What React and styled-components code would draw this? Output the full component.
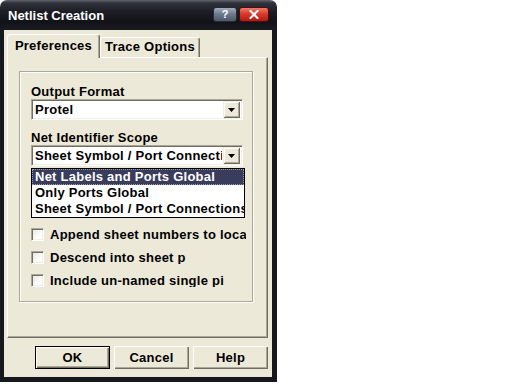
import React from "react";
import styled, { createGlobalStyle } from "styled-components";

const C = {
  face: "#ece9d8",
  hi: "#ffffff",
  light: "#f1efe2",
  shadow: "#aca899",
  dark: "#716f64",
  frame: "#17181e",
};

const Global = createGlobalStyle`
  html, body { margin: 0; padding: 0; background: #ffffff; }
  body { font-family: "Liberation Sans", Arial, sans-serif; }
`;

const Window = styled.div`
  width: 277px;
  height: 382px;
  display: flex;
  flex-direction: column;
  font: bold 13px "Liberation Sans", Arial, sans-serif;
  letter-spacing: 0.25px;
  color: #000;
`;

const TitleBar = styled.div`
  height: 30px;
  flex: none;
  display: flex;
  align-items: flex-start;
  box-sizing: border-box;
  padding: 0 8px;
  border-radius: 7px 7px 0 0;
  background: linear-gradient(
    180deg,
    #62656f 0px,
    #30323b 3px,
    #1c1d24 12px,
    #121318 22px,
    #1a1b22 30px
  );
  color: #fff;
  letter-spacing: 0;
`;

const Title = styled.span`
  flex: 1;
  margin-top: 8px;
  line-height: 16px;
`;

const CaptionButton = styled.div`
  margin-top: 7px;
  margin-left: 2px;
  width: ${(p) => p.$w}px;
  height: 15px;
  box-sizing: border-box;
  border-radius: 3px;
  display: flex;
  align-items: center;
  justify-content: center;
  color: #fff;
  font-size: 11px;
  line-height: 13px;
  border: 1px solid ${(p) => (p.$close ? "#4e0f0c" : "#262b35")};
  background: ${(p) =>
    p.$close
      ? "linear-gradient(180deg, #f07a6c 0%, #d83a2c 45%, #b01c12 100%)"
      : "linear-gradient(180deg, #a3adbd 0%, #6f7b8e 45%, #4d586a 100%)"};
`;

const Frame = styled.div`
  flex: 1;
  display: flex;
  flex-direction: column;
  background: ${C.face};
  border-style: solid;
  border-color: ${C.frame};
  border-width: 0 5px 5px 4px;
  padding: 4px 4px 0 3px;
`;

const TabStrip = styled.div`
  height: 23px;
  display: flex;
  align-items: flex-end;
  position: relative;
  z-index: 1;
`;

const Tab = styled.div`
  width: ${(p) => p.$w}px;
  height: ${(p) => (p.$active ? 24 : 20)}px;
  margin-bottom: ${(p) => (p.$active ? -1 : 0)}px;
  box-sizing: border-box;
  background: ${C.face};
  border: 1px solid;
  border-color: ${C.hi} ${C.dark} transparent ${C.hi};
  border-bottom: none;
  border-radius: 3px 3px 0 0;
  box-shadow: inset -1px 0 0 ${C.shadow};
  text-align: center;
  padding-top: ${(p) => (p.$active ? 3 : 1)}px;
  line-height: 15px;
  white-space: nowrap;
`;

const TabPanel = styled.div`
  height: 281px;
  flex: none;
  box-sizing: border-box;
  border: 1px solid;
  border-color: ${C.hi} ${C.dark} ${C.dark} ${C.hi};
  box-shadow: inset -1px -1px 0 ${C.shadow};
  padding: 13px 0 0 11px;
`;

const GroupBox = styled.div`
  width: 234px;
  height: 231px;
  box-sizing: border-box;
  border: 1px solid ${C.shadow};
  box-shadow: 1px 1px 0 ${C.hi}, inset 1px 1px 0 ${C.hi};
  padding: 12px 0 0 11px;
  display: flex;
  flex-direction: column;
`;

const FieldLabel = styled.div`
  height: 15px;
  line-height: 15px;
  white-space: nowrap;
  margin-top: ${(p) => p.$mt || 0}px;
`;

const Combo = styled.div`
  position: relative;
  width: 212px;
  height: 21px;
  box-sizing: border-box;
  display: flex;
  align-items: center;
  background: #fff;
  border: 1px solid;
  border-color: ${C.shadow} ${C.hi} ${C.hi} ${C.shadow};
  box-shadow: inset 1px 1px 0 ${C.dark}, inset -1px -1px 0 ${C.light};
  padding: 2px 2px 2px 3px;
`;

const ComboText = styled.span`
  flex: 1;
  overflow: hidden;
  white-space: nowrap;
  line-height: 15px;
`;

const ArrowButton = styled.div`
  width: 17px;
  height: 17px;
  flex: none;
  box-sizing: border-box;
  margin-left: 1px;
  background: ${C.face};
  display: flex;
  align-items: center;
  justify-content: center;
  box-shadow: inset 1px 1px 0 ${C.light}, inset -1px -1px 0 ${C.dark},
    inset 2px 2px 0 ${C.hi}, inset -2px -2px 0 ${C.shadow};
`;

const DropList = styled.div`
  position: absolute;
  left: -1px;
  top: 22px;
  width: 214px;
  box-sizing: border-box;
  border: 1px solid #000;
  background: #fff;
  z-index: 2;
`;

const ListItem = styled.div`
  height: 16px;
  line-height: 16px;
  padding-left: 3px;
  white-space: nowrap;
  overflow: hidden;
  background: ${(p) => (p.$selected ? "#393c5b" : "#fff")};
  color: ${(p) => (p.$selected ? "#fff" : "#000")};
  outline: ${(p) => (p.$selected ? "1px dotted #9a9cb4" : "none")};
  outline-offset: -1px;
`;

const CheckList = styled.div`
  margin-top: 62px;
  display: flex;
  flex-direction: column;
  gap: 10px;
`;

const CheckRow = styled.div`
  display: flex;
  align-items: center;
  height: 13px;
`;

const CheckBox = styled.div`
  width: 13px;
  height: 13px;
  flex: none;
  box-sizing: border-box;
  border: 1px solid;
  border-color: ${C.shadow} ${C.hi} ${C.hi} ${C.shadow};
  box-shadow: inset 1px 1px 0 ${C.dark}, inset -1px -1px 0 ${C.light};
  background: linear-gradient(135deg, #e6e4da 0%, #ffffff 70%);
`;

const CheckLabel = styled.span`
  margin-left: 6px;
  max-width: ${(p) => p.$w}px;
  overflow: hidden;
  white-space: nowrap;
  line-height: 13px;
`;

const ButtonRow = styled.div`
  margin-top: 8px;
  display: flex;
  justify-content: flex-end;
  gap: 4px;
`;

const Button = styled.button`
  width: 75px;
  height: 23px;
  box-sizing: border-box;
  padding: 0;
  margin: 0;
  font: inherit;
  letter-spacing: inherit;
  color: #000;
  background: ${C.face};
  border: ${(p) => (p.$default ? "1px solid #000" : "none")};
  box-shadow: inset 1px 1px 0 ${C.hi}, inset -1px -1px 0 ${C.dark},
    inset -2px -2px 0 ${C.shadow};
  text-align: center;
  line-height: 15px;
`;

const DownArrow = () => (
  <svg width="7" height="4" viewBox="0 0 7 4">
    <polygon points="0,0 7,0 3.5,4" fill="#000" />
  </svg>
);

const CloseGlyph = () => (
  <svg width="10" height="9" viewBox="0 0 10 9">
    <path d="M1.5 1 L8.5 8 M8.5 1 L1.5 8" stroke="#fff" strokeWidth="2" strokeLinecap="square" />
  </svg>
);

const scopes = [
  "Net Labels and Ports Global",
  "Only Ports Global",
  "Sheet Symbol / Port Connections",
];

const options = [
  { text: "Append sheet numbers to loca", w: 196 },
  { text: "Descend into sheet p", w: 140 },
  { text: "Include un-named single pi", w: 182 },
];

export default function App() {
  return (
    <>
      <Global />
      <Window>
        <TitleBar>
          <Title>Netlist Creation</Title>
          <CaptionButton $w={24}>?</CaptionButton>
          <CaptionButton $w={30} $close>
            <CloseGlyph />
          </CaptionButton>
        </TitleBar>
        <Frame>
          <TabStrip>
            <Tab $w={93} $active>
              Preferences
            </Tab>
            <Tab $w={100}>Trace Options</Tab>
          </TabStrip>
          <TabPanel>
            <GroupBox>
              <FieldLabel>Output Format</FieldLabel>
              <Combo>
                <ComboText>Protel</ComboText>
                <ArrowButton>
                  <DownArrow />
                </ArrowButton>
              </Combo>
              <FieldLabel $mt={10}>Net Identifier Scope</FieldLabel>
              <Combo>
                <ComboText>Sheet Symbol / Port Connecti</ComboText>
                <ArrowButton>
                  <DownArrow />
                </ArrowButton>
                <DropList>
                  {scopes.map((s, i) => (
                    <ListItem key={s} $selected={i === 0}>
                      {s}
                    </ListItem>
                  ))}
                </DropList>
              </Combo>
              <CheckList>
                {options.map((o) => (
                  <CheckRow key={o.text}>
                    <CheckBox />
                    <CheckLabel $w={o.w}>{o.text}</CheckLabel>
                  </CheckRow>
                ))}
              </CheckList>
            </GroupBox>
          </TabPanel>
          <ButtonRow>
            <Button $default>OK</Button>
            <Button>Cancel</Button>
            <Button>Help</Button>
          </ButtonRow>
        </Frame>
      </Window>
    </>
  );
}
